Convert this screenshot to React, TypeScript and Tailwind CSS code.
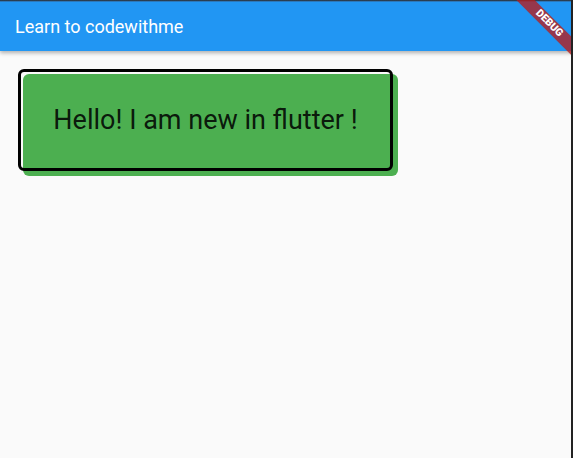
export default function App() {
  return (
    <div
      className="relative h-[458px] w-[573px] overflow-hidden bg-[#fafafa]"
      style={{ fontFamily: "Roboto, 'Liberation Sans', sans-serif" }}
    >
      {/* app bar */}
      <header className="relative z-10 flex h-[51px] items-center bg-[#2196f3] px-[15px] shadow-[0_2px_4px_rgba(0,0,0,0.3)]">
        <div className="absolute inset-x-0 top-0 h-[2px] bg-gradient-to-b from-[#222] to-[#2196f3]" />
        <h1 className="mt-[1px] text-[18px] font-normal text-white">Learn to codewithme</h1>
      </header>

      {/* box with offset green shadow */}
      <div className="relative ml-[18px] mt-[18px] w-[375px]">
        <div className="absolute left-[5px] top-[5px] h-[102px] w-[375px] rounded-[6px] bg-[#4caf50]" />
        <div className="relative flex h-[102px] w-[375px] items-center justify-center rounded-[6px] border-[3px] border-black">
          <span className="text-[27px] text-[rgba(0,0,0,0.87)]">Hello! I am new in flutter !</span>
        </div>
      </div>

      {/* debug banner */}
      <div className="absolute left-[509px] top-[17px] z-20 flex h-[13px] w-[80px] rotate-45 items-center justify-center bg-[rgba(183,28,28,0.78)]">
        <span className="text-[10.5px] font-black leading-none text-white">DEBUG</span>
      </div>
      <div className="absolute right-0 top-0 z-30 h-full w-[2px] bg-[#222]" />
    </div>
  );
}
